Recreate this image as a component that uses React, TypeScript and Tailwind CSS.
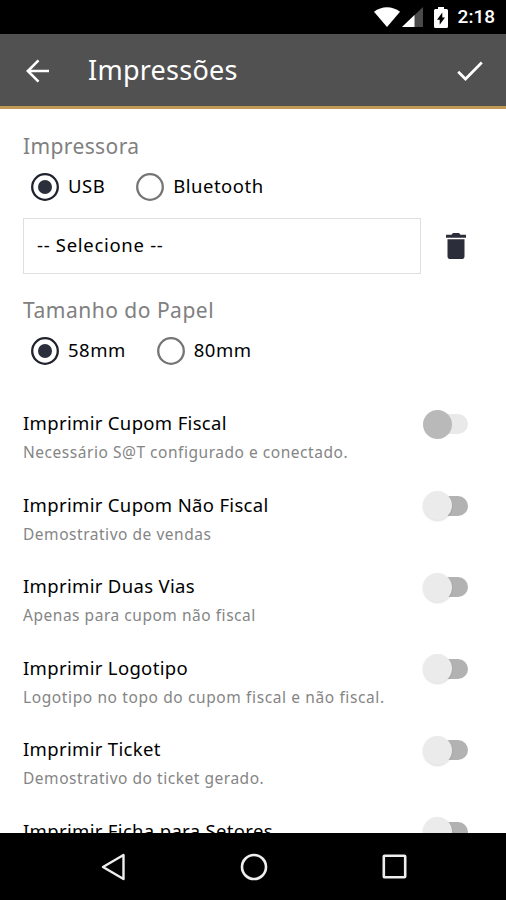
import React, { useState } from 'react';

interface RadioProps {
  label: string;
  name: string;
  checked: boolean;
  onChange: () => void;
}

function Radio({ label, name, checked, onChange }: RadioProps) {
  return (
    <label className="flex h-7 items-center whitespace-nowrap text-black">
      <input type="radio" name={name} checked={checked} onChange={onChange} className="sr-only" />
      <svg width="28" height="28" viewBox="0 0 28 28" className="shrink-0">
        <circle cx="14" cy="14" r="12.8" fill="none" stroke={checked ? '#20222d' : '#757575'} strokeWidth="2.3" />
        {checked && <circle cx="14" cy="14" r="7" fill="#2b2e3b" />}
      </svg>
      <span className="mb-[2px] ml-[9px] text-[18.5px] leading-7 tracking-[0.5px]">{label}</span>
    </label>
  );
}

interface SettingRowProps {
  title: string;
  hint?: string;
  hintTracking?: string;
  disabled?: boolean;
}

function SettingRow({ title, hint, hintTracking = 'tracking-[0.53px]', disabled }: SettingRowProps) {
  return (
    <div className="flex h-[81.6px] shrink-0 items-start justify-between">
      <div className="whitespace-nowrap">
        <p className="text-[18.5px] leading-7 tracking-[0.33px] text-black">{title}</p>
        {hint && <p className={`mt-[3px] text-[15.5px] leading-6 text-[#858585] ${hintTracking}`}>{hint}</p>}
      </div>
      <div className="mt-[0.5px] flex h-[29px] w-[45px] shrink-0 items-center">
        <div
          className={`z-10 size-[29px] shrink-0 rounded-full ${
            disabled ? 'bg-[#b9b9b9]' : 'bg-[#ebebeb] shadow-[0_1px_2px_rgba(0,0,0,0.14)]'
          }`}
        />
        <div className={`-ml-[14px] h-[20px] w-[30px] rounded-r-full ${disabled ? 'bg-[#e9e9e9]' : 'bg-[#b2b2b2]'}`} />
      </div>
    </div>
  );
}

const settings: SettingRowProps[] = [
  { title: 'Imprimir Cupom Fiscal', hint: 'Necessário S@T configurado e conectado.', disabled: true },
  { title: 'Imprimir Cupom Não Fiscal', hint: 'Demostrativo de vendas' },
  { title: 'Imprimir Duas Vias', hint: 'Apenas para cupom não fiscal' },
  {
    title: 'Imprimir Logotipo',
    hint: 'Logotipo no topo do cupom fiscal e não fiscal.',
    hintTracking: 'tracking-[0.61px]',
  },
  { title: 'Imprimir Ticket', hint: 'Demostrativo do ticket gerado.' },
  { title: 'Imprimir Ficha para Setores' },
];

function StatusBar() {
  return (
    <div className="flex h-[34px] shrink-0 items-center justify-end bg-black pr-[11px] text-white">
      <svg width="26" height="20" viewBox="0 0 26 20">
        <path d="M0 4.8C7.5-1.3 18.5-1.3 26 4.8L13 20z" fill="currentColor" />
      </svg>
      <svg width="21" height="20" viewBox="0 0 21 20" className="ml-[2px]">
        <path d="M0 20L21 0v20z" fill="#4a4a4a" />
        <path d="M0 20L12.5 8v12z" fill="currentColor" />
      </svg>
      <svg width="14" height="21" viewBox="0 0 14 21" className="ml-[11px]">
        <path d="M4 0h6v2h2.5q1.5 0 1.5 1.500v16q0 1.500-1.500 1.500h-11q-1.500 0-1.500-1.500v-16q0-1.500 1.500-1.500H4z" fill="currentColor" />
        <path d="M8.300 5.500v5H11L5.700 17.800v-5H3z" fill="#000" />
      </svg>
      <span className="ml-[10px] font-[Roboto,sans-serif] text-[19px] leading-[34px] font-medium">2:18</span>
    </div>
  );
}

function Header() {
  return (
    <header className="flex h-[75px] shrink-0 items-center border-b-[3px] border-[#c19a56] bg-[#515151] pr-[23px] pl-[26px] text-white">
      <svg width="24" height="24" viewBox="0 0 24 24" fill="none" stroke="currentColor" strokeWidth="2.6" className="mt-[2px]">
        <path d="M23 12H2M12.5 1.3L1.8 12l10.700 10.700" />
      </svg>
      <h1 className="ml-[38px] text-[27px] leading-9 tracking-[0.25px]">Impressões</h1>
      <svg width="26" height="20" viewBox="0 0 26 20" fill="none" stroke="currentColor" strokeWidth="2.7" className="mt-[2px] ml-auto">
        <path d="M1.2 10.8L8.5 18 24.800 1.500" />
      </svg>
    </header>
  );
}

function NavBar() {
  return (
    <nav className="flex h-[67px] shrink-0 items-center bg-black pl-[101px]">
      <svg width="26" height="28" viewBox="0 0 26 28" fill="none" stroke="#eee" strokeWidth="2.4" strokeLinejoin="round">
        <path d="M2 14L22.500 2v24z" />
      </svg>
      <svg width="28" height="28" viewBox="0 0 28 28" fill="none" stroke="#eee" strokeWidth="2.6" className="ml-[112.5px]">
        <circle cx="14" cy="14" r="12" />
      </svg>
      <svg width="25" height="25" viewBox="0 0 25 25" fill="none" stroke="#eee" strokeWidth="2.6" className="ml-[114.5px]">
        <rect x="1.8" y="1.8" width="21.4" height="21.4" rx="0.8" />
      </svg>
    </nav>
  );
}

export default function App() {
  const [printer, setPrinter] = useState('usb');
  const [paper, setPaper] = useState('58');

  return (
    <div className="flex h-[900px] w-[506px] flex-col overflow-hidden bg-white font-['Noto_Sans',sans-serif]">
      <StatusBar />
      <Header />
      <main className="flex min-h-0 flex-1 flex-col overflow-hidden pr-[38px] pl-[23px]">
        <h2 className="mt-[21px] text-[21px] leading-8 tracking-[0.38px] text-[#808080]">Impressora</h2>
        <div className="mt-[11px] flex gap-[31px] pl-2">
          <Radio label="USB" name="printer" checked={printer === 'usb'} onChange={() => setPrinter('usb')} />
          <Radio label="Bluetooth" name="printer" checked={printer === 'bt'} onChange={() => setPrinter('bt')} />
        </div>
        <div className="mt-[17px] flex shrink-0 items-center justify-between">
          <button className="h-[56px] w-[398px] border-[1.5px] border-[#dfdfdf] pb-[2px] pl-[13px] text-left text-[18.5px] tracking-[0.7px] text-black">
            -- Selecione --
          </button>
          <svg width="20" height="26" viewBox="0 0 20 26" fill="#2b2d3a" className="mr-[2px]">
            <path d="M0 1.8h5.5L7 0h6l1.5 1.8H20v2.900H0zM1.500 6.200h17v17q0 2.800-2.800 2.800H4.300q-2.800 0-2.800-2.800z" />
          </svg>
        </div>
        <h2 className="mt-[20px] text-[21px] leading-8 tracking-[0.5px] text-[#808080]">Tamanho do Papel</h2>
        <div className="mt-[11px] flex gap-[31px] pl-2">
          <Radio label="58mm" name="paper" checked={paper === '58'} onChange={() => setPaper('58')} />
          <Radio label="80mm" name="paper" checked={paper === '80'} onChange={() => setPaper('80')} />
        </div>
        <div className="mt-[44px] flex flex-col">
          {settings.map((setting) => (
            <SettingRow key={setting.title} {...setting} />
          ))}
        </div>
      </main>
      <NavBar />
    </div>
  );
}
